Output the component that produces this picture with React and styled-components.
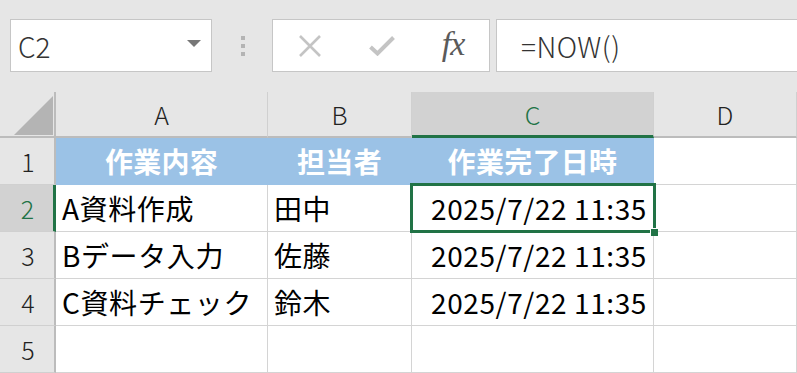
import React from 'react';
import styled, { createGlobalStyle } from 'styled-components';

const GlobalStyle = createGlobalStyle`
  body {
    margin: 0;
    background: #ffffff;
    font-family: "Noto Sans CJK JP", "Noto Sans", sans-serif;
    overflow: hidden;
  }
`;

const Page = styled.div`
  width: 797px;
  height: 373px;
  overflow: hidden;
`;

const Toolbar = styled.div`
  display: flex;
  align-items: flex-start;
  height: 92px;
  box-sizing: border-box;
  padding: 19px 0 0 10px;
  background: #e6e6e6;
`;

const NameBox = styled.div`
  display: flex;
  align-items: center;
  justify-content: space-between;
  box-sizing: border-box;
  width: 202px;
  height: 53px;
  padding: 0 10px 0 7px;
  background: #ffffff;
  border: 1px solid #c6c6c6;
  color: #333333;
  font-size: 28px;
  font-weight: 300;
`;

const Caret = styled.span`
  width: 0;
  height: 0;
  margin-top: -4px;
  border-left: 7px solid transparent;
  border-right: 7px solid transparent;
  border-top: 7px solid #777777;
`;

const Grip = styled.div`
  display: flex;
  flex-direction: column;
  gap: 4px;
  width: 4px;
  margin: 17px 27px 0 29px;

  span {
    width: 4px;
    height: 4px;
    background: #b4b4b4;
  }
`;

const ButtonBox = styled.div`
  display: flex;
  align-items: center;
  box-sizing: border-box;
  width: 218px;
  height: 53px;
  background: #ffffff;
  border: 1px solid #c6c6c6;
`;

const IconSlot = styled.div`
  display: flex;
  align-items: center;
  justify-content: center;
  width: ${(props) => props.$w}px;
  height: 100%;
`;

const Fx = styled.span`
  font-family: "Liberation Serif", serif;
  font-style: italic;
  font-size: 34px;
  color: #5a5a5a;
  letter-spacing: -1px;
  margin-top: -4px;
`;

const FormulaInput = styled.div`
  display: flex;
  align-items: center;
  flex: 1;
  box-sizing: border-box;
  height: 53px;
  margin-left: 6px;
  margin-right: -4px;
  padding-left: 24px;
  background: #ffffff;
  border: 1px solid #c6c6c6;
  color: #333333;
  font-size: 28px;
  font-weight: 300;
  letter-spacing: 0.5px;
`;

const Grid = styled.div`
  display: grid;
  grid-template-columns: 56px 212px 144px 242px 1fr;
  grid-template-rows: 46px repeat(5, 47px);
  position: relative;
`;

const Corner = styled.div`
  position: relative;
  background: #e6e6e6;
  border-right: 2px solid #bcbcbc;
  border-bottom: 2px solid #bcbcbc;
  box-sizing: border-box;

  svg {
    position: absolute;
    left: 14px;
    top: 4px;
  }
`;

const ColHead = styled.div`
  display: flex;
  align-items: center;
  justify-content: center;
  box-sizing: border-box;
  background: ${(props) => (props.$active ? '#d2d2d2' : '#e6e6e6')};
  color: ${(props) => (props.$active ? '#217346' : '#222222')};
  border-right: 1px solid #d0d0d0;
  border-bottom: ${(props) =>
    props.$active ? '3px solid #217346' : '2px solid #bcbcbc'};
  font-size: 25px;
  font-weight: 300;
`;

const RowHead = styled.div`
  display: flex;
  align-items: center;
  justify-content: center;
  box-sizing: border-box;
  background: ${(props) => (props.$active ? '#d2d2d2' : '#e6e6e6')};
  color: ${(props) => (props.$active ? '#217346' : '#222222')};
  border-right: ${(props) =>
    props.$active ? '3px solid #217346' : '2px solid #bcbcbc'};
  border-bottom: 1px solid #d0d0d0;
  font-size: 25px;
  font-weight: 300;
  padding-left: 2px;
`;

const Cell = styled.div`
  display: flex;
  align-items: center;
  justify-content: ${(props) =>
    props.$align === 'right'
      ? 'flex-end'
      : props.$align === 'center'
      ? 'center'
      : 'flex-start'};
  box-sizing: border-box;
  padding: 0 6px 0 6px;
  background: ${(props) => (props.$head ? '#9bc2e6' : '#ffffff')};
  color: ${(props) => (props.$head ? '#ffffff' : '#000000')};
  font-weight: ${(props) => (props.$head ? 700 : 400)};
  border-right: 1px solid ${(props) => (props.$head ? '#9bc2e6' : '#d4d4d4')};
  border-bottom: 1px solid ${(props) => (props.$head ? '#9bc2e6' : '#d4d4d4')};
  font-size: 28px;
  letter-spacing: ${(props) => (props.$head ? '0.3px' : '0.6px')};
  white-space: nowrap;
`;

const Selection = styled.div`
  position: absolute;
  left: 410px;
  top: 91px;
  width: 246px;
  height: 50px;
  box-sizing: border-box;
  border: 3px solid #217346;
  pointer-events: none;

  &::after {
    content: '';
    position: absolute;
    right: -5px;
    bottom: -6px;
    width: 7px;
    height: 7px;
    background: #217346;
    border: 1px solid #ffffff;
    border-right: none;
    border-bottom: none;
  }
`;

const rows = [
  ['A資料作成', '田中', '2025/7/22 11:35'],
  ['Bデータ入力', '佐藤', '2025/7/22 11:35'],
  ['C資料チェック', '鈴木', '2025/7/22 11:35'],
];

export default function App() {
  return (
    <Page>
      <GlobalStyle />
      <Toolbar>
        <NameBox>
          <span>C2</span>
          <Caret />
        </NameBox>
        <Grip>
          <span />
          <span />
          <span />
        </Grip>
        <ButtonBox>
          <IconSlot $w={74}>
            <svg width="24" height="22" viewBox="0 0 24 22" aria-hidden="true">
              <path d="M2 1 L22 21 M22 1 L2 21" stroke="#c4c4c4" strokeWidth="2.6" fill="none" />
            </svg>
          </IconSlot>
          <IconSlot $w={70}>
            <svg width="26" height="20" viewBox="0 0 26 20" aria-hidden="true">
              <path d="M1.5 11 L8.5 17.5 L24.5 1.5" stroke="#c4c4c4" strokeWidth="4" fill="none" />
            </svg>
          </IconSlot>
          <IconSlot $w={72}>
            <Fx>fx</Fx>
          </IconSlot>
        </ButtonBox>
        <FormulaInput>=NOW()</FormulaInput>
      </Toolbar>
      <Grid>
        <Corner>
          <svg width="40" height="40" viewBox="0 0 40 40" aria-hidden="true">
            <polygon points="39,0 39,39 0,39" fill="#b4b4b4" />
          </svg>
        </Corner>
        <ColHead>A</ColHead>
        <ColHead>B</ColHead>
        <ColHead $active>C</ColHead>
        <ColHead>D</ColHead>

        <RowHead>1</RowHead>
        <Cell $head $align="center">作業内容</Cell>
        <Cell $head $align="center">担当者</Cell>
        <Cell $head $align="center">作業完了日時</Cell>
        <Cell />

        {rows.map((r, i) => (
          <React.Fragment key={i}>
            <RowHead $active={i === 0}>{i + 2}</RowHead>
            <Cell>{r[0]}</Cell>
            <Cell>{r[1]}</Cell>
            <Cell $align="right">{r[2]}</Cell>
            <Cell />
          </React.Fragment>
        ))}

        <RowHead>5</RowHead>
        <Cell />
        <Cell />
        <Cell />
        <Cell />
        <Selection />
      </Grid>
    </Page>
  );
}
